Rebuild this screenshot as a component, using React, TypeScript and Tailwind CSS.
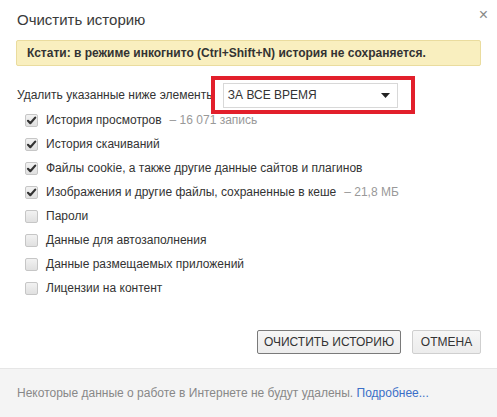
import React from "react";

const Check = ({ checked }: { checked: boolean }) => (
  <span className="relative flex h-[13px] w-[13px] shrink-0 items-center justify-center rounded-[2px] border border-[#c6c6c6] bg-gradient-to-b from-[#f2f2f2] to-[#e0e0e0]">
    {checked && (
      <svg width="11" height="11" viewBox="0 0 11 11" className="absolute">
        <path d="M2 5.8 L4.3 8.2 L9.2 2.6" fill="none" stroke="#333" strokeWidth="2.2" strokeLinecap="round" strokeLinejoin="round" />
      </svg>
    )}
  </span>
);

const Row = ({ checked, label, extra }: { checked: boolean; label: string; extra?: string }) => (
  <div className="flex h-[24px] items-center">
    <div className="ml-[25px] mr-[8px]">
      <Check checked={checked} />
    </div>
    <span className="text-[12px] text-[#333]">{label}</span>
    {extra && <span className="ml-[8px] text-[12px] text-[#999]">{extra}</span>}
  </div>
);

export default function App() {
  return (
    <div className="flex h-[417px] w-[497px] flex-col bg-white" style={{ fontFamily: '"Liberation Sans", Arial, sans-serif' }}>
      <div className="relative flex h-[40px] items-start pl-[17px] pt-[9px]">
        <span className="text-[15px] text-[#3a3a3a]">Очистить историю</span>
        <span className="absolute right-[9px] top-[3px] text-[16px] text-[#888]">×</span>
      </div>
      <div className="mx-[16px] flex h-[26px] items-center rounded-[2px] border border-[#eadc9e] bg-[#f9efbf] pl-[10px]">
        <span className="text-[12px] font-bold text-[#333]">Кстати: в режиме инкогнито (Ctrl+Shift+N) история не сохраняется.</span>
      </div>
      <div className="mt-[10px] flex h-[38px] items-center pl-[17px]">
        <span className="text-[12px] text-[#333]">Удалить указанные ниже элементы</span>
        <div className="relative ml-[-4px] flex h-[38px] w-[204px] items-center border-[4px] border-[#e21f2b] bg-white pl-[8px]">
          <div className="flex h-[25px] w-[175px] items-center justify-between border border-[#d8d8d8] bg-white pl-[4px] pr-[7px]">
            <span className="text-[12px] text-[#333]">ЗА ВСЕ ВРЕМЯ</span>
            <svg width="9" height="5" viewBox="0 0 9 5"><path d="M0 0 H9 L4.5 5 Z" fill="#222" /></svg>
          </div>
        </div>
      </div>
      <div className="mt-[-6px] flex flex-col">
        <Row checked label="История просмотров" extra="–  16 071 запись" />
        <Row checked label="История скачиваний" />
        <Row checked label="Файлы cookie, а также другие данные сайтов и плагинов" />
        <Row checked label="Изображения и другие файлы, сохраненные в кеше" extra="–  21,8 МБ" />
        <Row checked={false} label="Пароли" />
        <Row checked={false} label="Данные для автозаполнения" />
        <Row checked={false} label="Данные размещаемых приложений" />
        <Row checked={false} label="Лицензии на контент" />
      </div>
      <div className="flex flex-1 items-start justify-end gap-[11px] pr-[16px] pt-[30px]">
        <button className="h-[24px] w-[144px] rounded-[2px] border border-[#7a7a7a] bg-gradient-to-b from-[#f6f6f6] to-[#ececec] text-[12px] text-[#333]">
          ОЧИСТИТЬ ИСТОРИЮ
        </button>
        <button className="h-[24px] w-[69px] rounded-[2px] border border-[#cfcfcf] bg-gradient-to-b from-[#f6f6f6] to-[#ececec] text-[12px] text-[#333]">
          ОТМЕНА
        </button>
      </div>
      <div className="flex h-[49px] items-center border-t border-[#e6e6e6] bg-[#f4f4f4] pl-[17px]">
        <span className="text-[12px] text-[#888]">
          Некоторые данные о работе в Интернете не будут удалены. <span className="text-[#3b6fc7]">Подробнее...</span>
        </span>
      </div>
    </div>
  );
}
